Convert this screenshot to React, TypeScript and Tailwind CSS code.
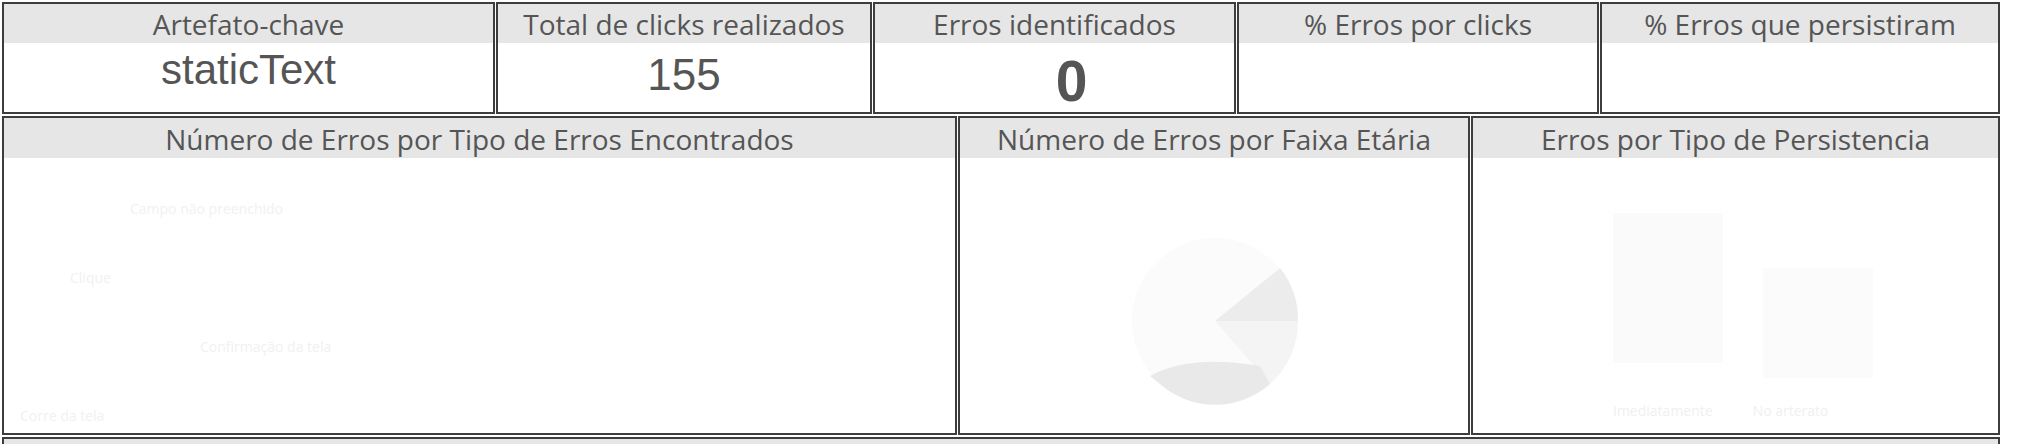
import React from "react"

const headFont = { fontFamily: '"Open Sans", "Noto Sans", sans-serif' }
const valueFont = { fontFamily: '"Liberation Sans", Arial, sans-serif' }

type CardProps = {
  title: string
  className?: string
  titleClass?: string
  children?: React.ReactNode
}

function Card({ title, className = "", titleClass = "", children }: CardProps) {
  return (
    <div className={`flex flex-col border-2 border-[#3d3d3d] bg-white overflow-hidden ${className}`}>
      <div
        className={`shrink-0 bg-[#e6e6e6] text-center text-[#555] whitespace-nowrap ${titleClass}`}
        style={headFont}
      >
        {title}
      </div>
      <div className="relative flex-1 min-h-0">{children}</div>
    </div>
  )
}

function KpiCard({ title, value, width, valueClass }: { title: string; value?: string; width: string; valueClass?: string }) {
  return (
    <Card title={title} className={`h-full ${width}`} titleClass="h-[39px] text-[28px] leading-[40px]">
      {value && (
        <div className={`h-full flex justify-center text-[#555] ${valueClass}`} style={valueFont}>
          {value}
        </div>
      )}
    </Card>
  )
}

function AgePie() {
  // quase apagado, só a forma do gráfico
  return (
    <svg width="170" height="170" viewBox="0 0 170 170" className="absolute left-[170px] top-[78px]">
      <circle cx="85" cy="85" r="83" fill="#fbfbfb" />
      <path d="M85 85 L150 32 A83 83 0 0 1 168 85 Z" fill="#ececec" />
      <path d="M85 85 L168 85 A83 83 0 0 1 140 148 Z" fill="#f4f4f4" />
      <path d="M20 140 Q60 118 130 130 L140 148 A83 83 0 0 1 30 148 Z" fill="#e9e9e9" />
    </svg>
  )
}

export default function App() {
  return (
    <div className="w-[2039px] h-[444px] overflow-hidden bg-white pl-[2px] pt-[2px]">
      <div className="w-[1998px] flex flex-col gap-[2px]">
        <div className="flex gap-[1px] h-[112px]">
          <KpiCard title="Artefato-chave" value="staticText" width="w-[493px]" valueClass="text-[42px] leading-none pt-[6px]" />
          <KpiCard title="Total de clicks realizados" value="155" width="w-[376px]" valueClass="text-[44px] leading-none pt-[10px]" />
          <KpiCard title="Erros identificados" value="0" width="w-[363px]" valueClass="text-[57px] font-bold leading-none pt-[10px] pl-[34px]" />
          <KpiCard title="% Erros por clicks" width="w-[362px]" />
          <KpiCard title="% Erros que persistiram" width="w-[400px]" />
        </div>

        <div className="flex gap-[1px] h-[319px]">
          <Card title="Número de Erros por Tipo de Erros Encontrados" className="w-[955px]" titleClass="h-[40px] text-[28px] leading-[42px]">
            <div className="px-4 pt-10 flex flex-col gap-12 text-[14px] text-[#f1f1f1]" style={headFont}>
              <span className="pl-[110px]">Campo não preenchido</span>
              <span className="pl-[50px]">Clique</span>
              <span className="pl-[180px]">Confirmação da tela</span>
              <span>Corre da tela</span>
            </div>
          </Card>
          <Card title="Número de Erros por Faixa Etária" className="w-[512px]" titleClass="h-[40px] text-[28px] leading-[42px]">
            <AgePie />
          </Card>
          <Card title="Erros por Tipo de Persistencia" className="w-[529px]" titleClass="h-[40px] text-[28px] leading-[42px]">
            <div className="absolute left-[140px] top-[55px] w-[110px] h-[150px] bg-[#fafafa]" />
            <div className="absolute left-[290px] top-[110px] w-[110px] h-[110px] bg-[#fbfbfb]" />
            <div className="absolute left-[140px] bottom-[12px] flex gap-[40px] text-[14px] text-[#f0f0f0]" style={headFont}>
              <span>Imediatamente</span>
              <span>No arterato</span>
            </div>
          </Card>
        </div>

        <Card title="" className="h-[60px]" titleClass="h-[40px]" />
      </div>
    </div>
  )
}
